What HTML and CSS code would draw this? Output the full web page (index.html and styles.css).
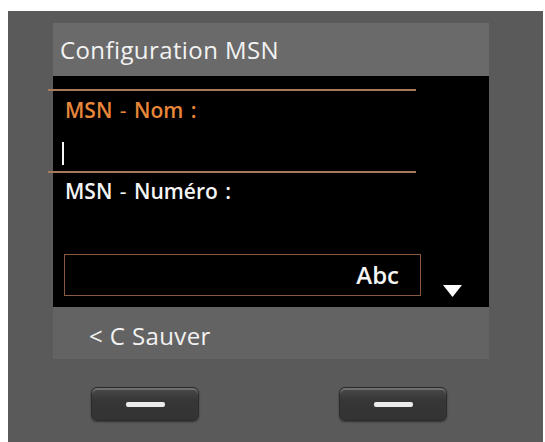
FILE: index.html
```html
<!DOCTYPE html>
<html lang="fr">
<head>
<meta charset="utf-8">
<title>Configuration MSN</title>
<link rel="stylesheet" href="styles.css">
</head>
<body>
<div class="device">
  <div class="screen">
    <div class="title">Configuration MSN</div>
    <div class="content">
      <div class="rule"></div>
      <div class="label label-active">MSN <span class="dash">-</span> Nom :</div>
      <div class="cursor"></div>
      <div class="rule"></div>
      <div class="label">MSN <span class="dash">-</span> Numéro :</div>
      <div class="input-row">
        <div class="mode-box"><span class="mode">Abc</span></div>
        <svg class="arrow" width="19" height="12" viewBox="0 0 19 12"><polygon points="0,0 19,0 9.5,12" fill="#ffffff"/></svg>
      </div>
    </div>
    <div class="softbar">&lt; C Sauver</div>
  </div>
  <div class="keys">
    <div class="key"><span class="key-mark"></span></div>
    <div class="key"><span class="key-mark"></span></div>
  </div>
</div>
</body>
</html>
```
FILE: styles.css
```css
html, body {
  margin: 0;
  padding: 0;
  background: #ffffff;
}
body {
  font-family: "Open Sans", "Noto Sans", sans-serif;
  overflow: hidden;
}
.device {
  margin: 11px 0 0 8px;
  width: 535px;
  height: 431px;
  background: #5a5a5a;
  padding: 12px 0 0 45px;
  box-sizing: border-box;
}
.screen {
  width: 436px;
}
.title {
  height: 53px;
  line-height: 53px;
  background: #6a6a6a;
  color: #f2f2f2;
  font-size: 24px;
  letter-spacing: 0.4px;
  padding-left: 7px;
}
.content {
  height: 231px;
  background: #000000;
  padding-top: 13px;
  box-sizing: border-box;
}
.rule {
  height: 2px;
  width: 368px;
  margin-left: -5px;
  background: #a87a5c;
}
.label {
  margin: 5px 0 0 12px;
  font-size: 21px;
  line-height: 28px;
  font-weight: 600;
  word-spacing: 2px;
  color: #f5f5f5;
}
.label .dash {
  font-weight: 400;
}
.label-active {
  color: #e8873a;
}
.cursor {
  width: 2px;
  height: 23px;
  margin: 18px 0 6px 9px;
  background: #f5f5f5;
}
.cursor + .rule + .label {
  margin-top: 4px;
}
.input-row {
  display: flex;
  align-items: flex-end;
  margin: 49px 0 0 11px;
}
.mode-box {
  width: 357px;
  height: 42px;
  box-sizing: border-box;
  border: 1.5px solid #8a5a40;
  display: flex;
  align-items: center;
  justify-content: flex-end;
  padding-right: 21px;
}
.mode {
  font-size: 24px;
  line-height: 32px;
  font-weight: 600;
  color: #f5f5f5;
}
.arrow {
  display: block;
  margin: 0 0 -1px 22px;
}
.softbar {
  height: 52px;
  box-sizing: border-box;
  background: #636363;
  color: #f2f2f2;
  font-size: 24px;
  letter-spacing: 0.4px;
  line-height: 46px;
  padding: 6px 0 0 36px;
}
.keys {
  display: flex;
  gap: 140px;
  margin: 28px 0 0 38px;
}
.key {
  width: 108px;
  height: 34px;
  box-sizing: border-box;
  border: 1px solid #2c2c2c;
  border-radius: 6px;
  background: linear-gradient(#4a4a4a, #363636 40%, #333333);
  box-shadow: inset 0 2px 0 #6e6e6e, 0 1px 2px rgba(0, 0, 0, 0.45);
  display: flex;
  align-items: center;
  justify-content: center;
}
.key-mark {
  width: 39px;
  height: 5px;
  border-radius: 2px;
  background: #ececec;
  margin-top: 1px;
}
```
